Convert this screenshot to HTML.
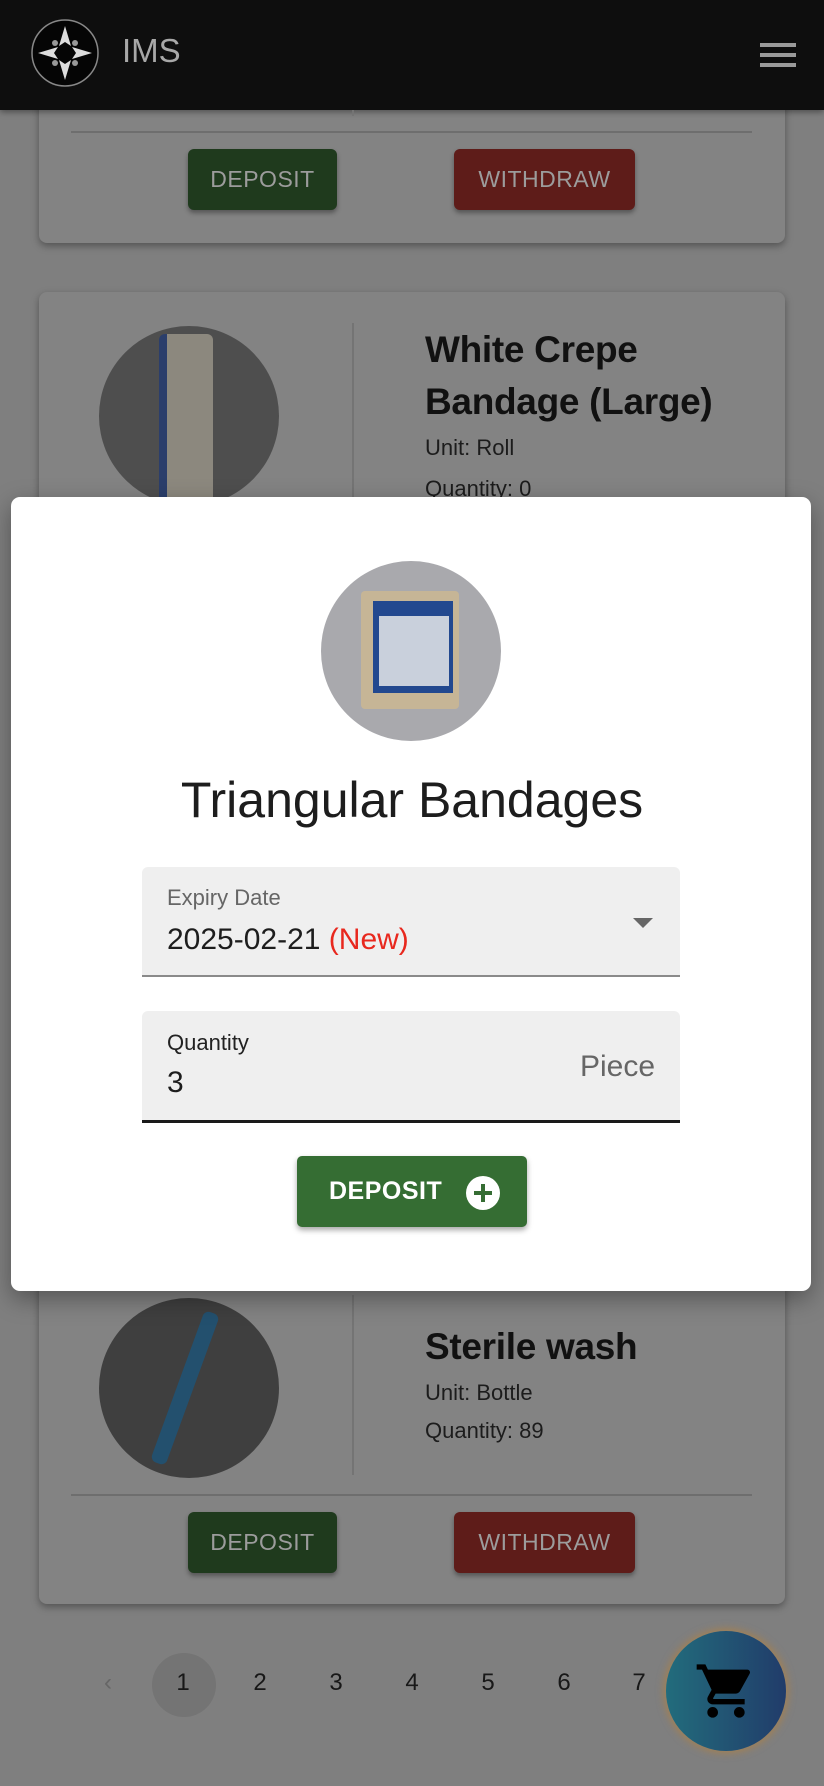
<!DOCTYPE html>
<html><head><meta charset="utf-8"><style>
*{margin:0;padding:0;box-sizing:border-box}
body{width:824px;height:1786px;background:#7f7f7f;font-family:"Liberation Sans",sans-serif;position:relative;overflow:hidden}
.a{position:absolute}
.card{position:absolute;left:39px;width:746px;background:#838383;border-radius:8px;box-shadow:0 3px 8px rgba(0,0,0,.35)}
.btn{position:absolute;height:61px;border-radius:6px;color:#9c9c9c;font-size:23px;text-align:center;line-height:61px;letter-spacing:.5px;box-shadow:0 3px 5px rgba(0,0,0,.35)}
.dep{background:#1f3a1d;left:188px;width:149px}
.wd{background:#5e1c19;left:454px;width:181px}
.hr{position:absolute;left:71px;width:681px;height:2px;background:#6e6e6e}
.vr{position:absolute;left:352px;width:2px;background:#747474}
.img{position:absolute;border-radius:50%;overflow:hidden}
.t{position:absolute;color:#111;font-weight:bold;font-size:37px;line-height:52px;letter-spacing:-.3px}
.s{position:absolute;color:#1c1c1c;font-size:22px}
.pg{position:absolute;top:1669px;font-size:24px;color:#181818;width:30px;text-align:center}
</style></head><body>
<div class="a" style="left:0;top:0;width:824px;height:110px;background:#0e0e0e;box-shadow:0 2px 6px rgba(0,0,0,.4)"></div>
<svg class="a" style="left:30px;top:18px" width="70" height="70" viewBox="0 0 70 70">
<circle cx="35" cy="35" r="33" fill="#050505" stroke="#888" stroke-width="1.5"/>
<g fill="#ddd"><path d="M35 8 L41 28 L35 24 L29 28Z"/><path d="M35 62 L41 42 L35 46 L29 42Z"/><path d="M8 35 L28 29 L24 35 L28 41Z"/><path d="M62 35 L42 29 L46 35 L42 41Z"/></g>
<g fill="#999"><circle cx="25" cy="25" r="3"/><circle cx="45" cy="25" r="3"/><circle cx="25" cy="45" r="3"/><circle cx="45" cy="45" r="3"/></g>
</svg>
<div class="a" style="left:122px;top:32px;font-size:33px;color:#a8a8a8">IMS</div>
<div class="a" style="left:760px;top:43px;width:36px;height:4px;background:#9a9a9a"></div>
<div class="a" style="left:760px;top:53px;width:36px;height:4px;background:#9a9a9a"></div>
<div class="a" style="left:760px;top:63px;width:36px;height:4px;background:#9a9a9a"></div>

<div class="card" style="top:60px;height:183px;z-index:-1"></div>
<div class="vr" style="top:110px;height:6px"></div>
<div class="hr" style="top:131px"></div>
<div class="btn dep" style="top:149px">DEPOSIT</div>
<div class="btn wd" style="top:149px">WITHDRAW</div>

<div class="card" style="top:292px;height:300px"></div>
<div class="img" style="left:99px;top:326px;width:180px;height:180px;background:#4e4e4e">
<div class="a" style="left:60px;top:8px;width:54px;height:170px;background:#8c887e;border-left:8px solid #2b3e6b;border-radius:6px"></div></div>
<div class="vr" style="top:323px;height:180px"></div>
<div class="t" style="left:425px;top:324px">White Crepe<br>Bandage (Large)</div>
<div class="s" style="left:425px;top:435px">Unit: Roll</div>
<div class="s" style="left:425px;top:476px">Quantity: 0</div>

<div class="card" style="top:1250px;height:354px"></div>
<div class="img" style="left:99px;top:1298px;width:180px;height:180px;background:#3f3f3f">
<div class="a" style="left:78px;top:10px;width:16px;height:160px;background:#23506e;transform:rotate(20deg);border-radius:6px"></div></div>
<div class="vr" style="top:1295px;height:180px"></div>
<div class="t" style="left:425px;top:1321px">Sterile wash</div>
<div class="s" style="left:425px;top:1380px">Unit: Bottle</div>
<div class="s" style="left:425px;top:1418px">Quantity: 89</div>
<div class="hr" style="top:1494px"></div>
<div class="btn dep" style="top:1512px">DEPOSIT</div>
<div class="btn wd" style="top:1512px">WITHDRAW</div>

<div class="pg" style="left:93px;color:#666">&#8249;</div>
<div class="a" style="left:152px;top:1653px;width:64px;height:64px;border-radius:50%;background:#747474"></div>
<div class="pg" style="left:168px">1</div>
<div class="pg" style="left:245px">2</div>
<div class="pg" style="left:321px">3</div>
<div class="pg" style="left:397px">4</div>
<div class="pg" style="left:473px">5</div>
<div class="pg" style="left:549px">6</div>
<div class="pg" style="left:624px">7</div>
<div class="a" style="left:666px;top:1631px;width:120px;height:120px;border-radius:50%;background:linear-gradient(90deg,#226c7c,#213c6a);box-shadow:0 0 8px 2px rgba(190,130,50,.6)"></div>
<svg class="a" style="left:694px;top:1659px" width="64" height="64" viewBox="0 0 24 24"><path fill="#000" d="M7 18c-1.1 0-2 .9-2 2s.9 2 2 2 2-.9 2-2-.9-2-2-2zM1 2v2h2l3.6 7.59-1.350 2.45c-.16.28-.25.61-.25.96 0 1.1.9 2 2 2h12v-2H7.42c-.14 0-.25-.11-.25-.25l.03-.12.9-1.630h7.45c.75 0 1.41-.41 1.75-1.03l3.58-6.49A1 1 0 0 0 20 4H5.21l-.94-2H1zm16 16c-1.1 0-2 .9-2 2s.9 2 2 2 2-.9 2-2-.9-2-2-2z"/></svg>

<div class="a" style="left:11px;top:497px;width:800px;height:794px;background:#fff;border-radius:9px;box-shadow:0 8px 24px rgba(0,0,0,.35)"></div>
<div class="img" style="left:321px;top:561px;width:180px;height:180px;background:#a9a9ad">
<div class="a" style="left:40px;top:30px;width:98px;height:118px;background:#c6b596;border-radius:4px"></div>
<div class="a" style="left:52px;top:40px;width:80px;height:92px;background:#22488f"></div>
<div class="a" style="left:58px;top:55px;width:70px;height:70px;background:#c9d0dc"></div>
</div>
<div class="a" style="left:0;top:771px;width:824px;text-align:center;font-size:50px;color:#1d1d1d">Triangular Bandages</div>
<div class="a" style="left:142px;top:867px;width:538px;height:110px;background:#efefef;border-radius:6px 6px 0 0;border-bottom:2px solid #8a8a8a"></div>
<div class="a" style="left:167px;top:885px;font-size:22px;color:#666">Expiry Date</div>
<div class="a" style="left:167px;top:923px;font-size:30px;color:#1d1d1d">2025-02-21 <span style="color:#e8281e">(New)</span></div>
<div class="a" style="left:633px;top:918px;width:0;height:0;border-left:10px solid transparent;border-right:10px solid transparent;border-top:10px solid #666"></div>
<div class="a" style="left:142px;top:1011px;width:538px;height:112px;background:#efefef;border-radius:6px 6px 0 0;border-bottom:3px solid #1a1a1a"></div>
<div class="a" style="left:167px;top:1030px;font-size:22px;color:#222">Quantity</div>
<div class="a" style="left:167px;top:1066px;font-size:30px;color:#1d1d1d">3</div>
<div class="a" style="left:555px;top:1050px;width:100px;text-align:right;font-size:30px;color:#666">Piece</div>
<div class="a" style="left:297px;top:1156px;width:230px;height:71px;background:#356d33;border-radius:5px;box-shadow:0 3px 6px rgba(0,0,0,.35)"></div>
<div class="a" style="left:329px;top:1177px;font-size:25px;color:#fff;font-weight:bold;letter-spacing:.5px">DEPOSIT</div>
<svg class="a" style="left:466px;top:1176px" width="34" height="34" viewBox="0 0 34 34"><circle cx="17" cy="17" r="17" fill="#fff"/><path d="M17 8v18M8 17h18" stroke="#356d33" stroke-width="4"/></svg>
</body></html>
